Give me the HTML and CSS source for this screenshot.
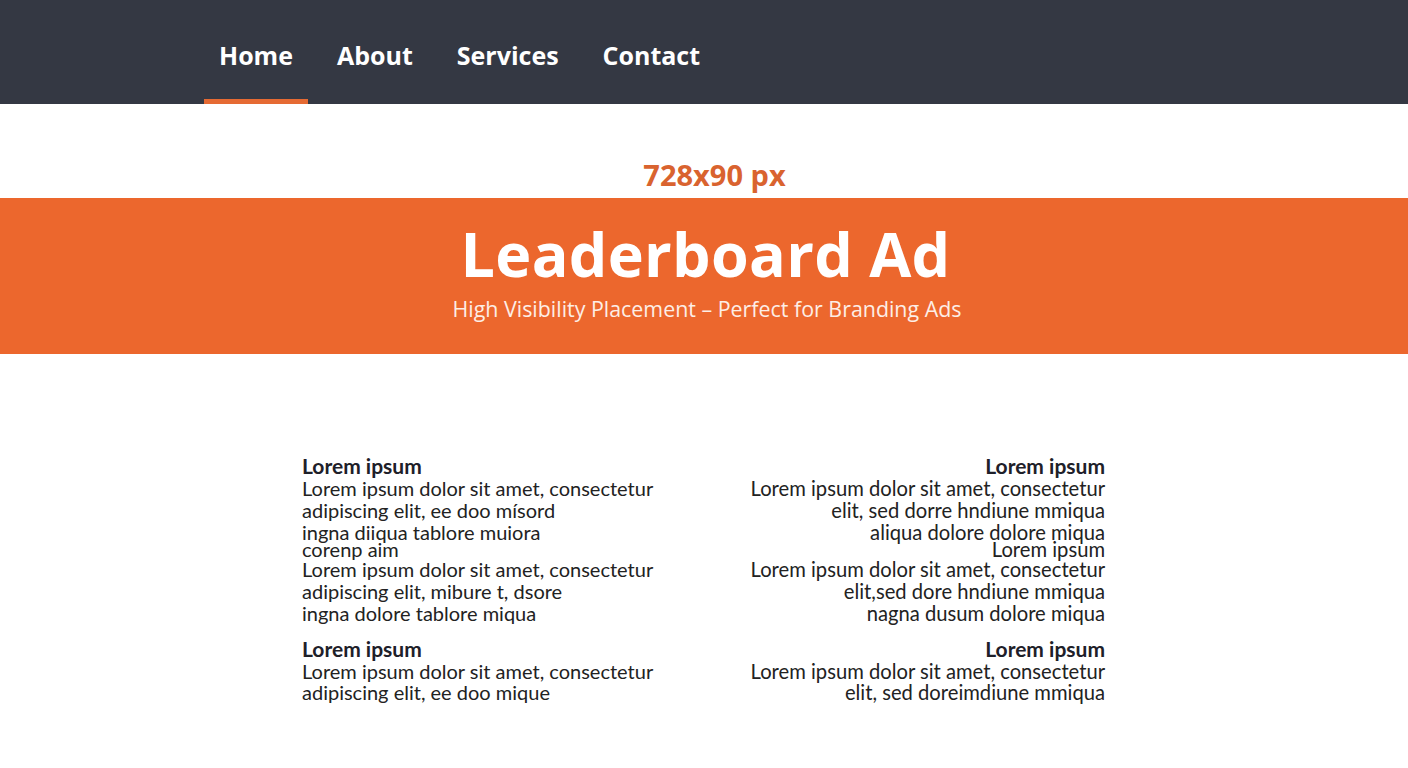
FILE: index.html
```html
<!DOCTYPE html>
<html lang="en">
<head>
<meta charset="utf-8">
<title>Leaderboard Ad</title>
<link rel="stylesheet" href="styles.css">
</head>
<body>
<header class="topbar">
  <nav class="nav">
    <a class="nav-link active" href="#">Home</a>
    <a class="nav-link" href="#">About</a>
    <a class="nav-link" href="#">Services</a>
    <a class="nav-link" href="#">Contact</a>
  </nav>
</header>
<main>
  <div class="size-label">728x90 px</div>
  <section class="banner">
    <h1 class="banner-title">Leaderboard Ad</h1>
    <p class="banner-sub">High Visibility Placement – Perfect for Branding Ads</p>
  </section>
  <section class="content">
    <div class="col col-left">
      <h2 class="col-head">Lorem ipsum</h2>
      <div class="col-text">
        <span class="ln">Lorem ipsum dolor sit amet, consectetur</span>
        <span class="ln">adipiscing elit, ee doo mísord</span>
        <span class="ln">ingna diiqua tablore muiora</span>
        <span class="ln tight">corenp aim</span>
        <span class="ln">Lorem ipsum dolor sit amet, consectetur</span>
        <span class="ln">adipiscing elit, mibure t, dsore</span>
        <span class="ln">ingna dolore tablore miqua</span>
      </div>
      <h2 class="col-head">Lorem ipsum</h2>
      <div class="col-text">
        <span class="ln">Lorem ipsum dolor sit amet, consectetur</span>
        <span class="ln">adipiscing elit, ee doo mique</span>
      </div>
    </div>
    <div class="col col-right">
      <h2 class="col-head">Lorem ipsum</h2>
      <div class="col-text">
        <span class="ln">Lorem ipsum dolor sit amet, consectetur</span>
        <span class="ln">elit, sed dorre hndiune mmiqua</span>
        <span class="ln">aliqua dolore dolore miqua</span>
        <span class="ln tight">Lorem ipsum</span>
        <span class="ln">Lorem ipsum dolor sit amet, consectetur</span>
        <span class="ln">elit,sed dore hndiune mmiqua</span>
        <span class="ln">nagna dusum dolore miqua</span>
      </div>
      <h2 class="col-head">Lorem ipsum</h2>
      <div class="col-text">
        <span class="ln">Lorem ipsum dolor sit amet, consectetur</span>
        <span class="ln">elit, sed doreimdiune mmiqua</span>
      </div>
    </div>
  </section>
</main>
</body>
</html>
```

FILE: styles.css
```css
* { box-sizing: border-box; }
html, body { margin: 0; padding: 0; background: #ffffff; }
body { font-family: "Open Sans", "Noto Sans", sans-serif; color: #222; }

.topbar {
  height: 104px;
  background: #343843;
}
.nav {
  display: flex;
  height: 100%;
  padding-left: 204px;
  gap: 14px;
}
.nav-link {
  display: flex;
  align-items: center;
  padding: 21px 15px 10px;
  color: #ffffff;
  text-decoration: none;
  font-weight: 700;
  font-size: 25px;
  border-bottom: 5px solid transparent;
}
.nav-link.active { border-bottom-color: #e56a33; }

.size-label {
  text-align: center;
  color: #d9632f;
  font-weight: 700;
  font-size: 29px;
  padding-top: 53px;
  padding-left: 21px;
  height: 94px;
  line-height: 36px;
}

.banner {
  height: 156px;
  background: #ec672d;
  color: #fff;
  text-align: center;
  padding-top: 18px;
}
.banner-title {
  margin: 0;
  padding-left: 3px;
  font-size: 61px;
  font-weight: 700;
  line-height: 76px;
  letter-spacing: 0.3px;
}
.banner-sub {
  margin: 0;
  padding-left: 6px;
  font-size: 21.4px;
  line-height: 34px;
  color: #fdeee6;
}

.content {
  display: flex;
  justify-content: space-between;
  width: 803px;
  margin: 100px 0 0 302px;
  font-family: "Lato", "Open Sans", sans-serif;
  color: #222;
}
.col-head {
  margin: 0;
  font-size: 21px;
  font-weight: 700;
  line-height: 24px;
  color: #1e2029;
}
.col-text {
  margin: 0 0 12px;
  font-size: 20px;
  color: #222;
}
.ln {
  display: block;
  line-height: 21.8px;
  white-space: nowrap;
}
.ln.tight { line-height: 12px; margin-top: 0; margin-bottom: 3.8px; }
.col-right { text-align: right; }
.col-right .col-text { font-size: 20.2px; }
```
